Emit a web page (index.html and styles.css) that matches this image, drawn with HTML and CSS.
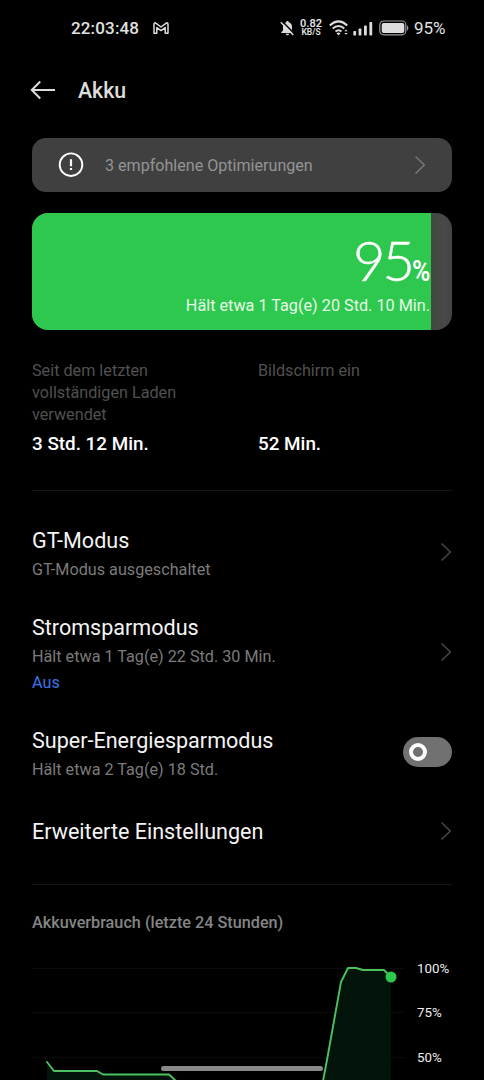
FILE: index.html
```html
<!DOCTYPE html>
<html lang="de">
<head>
<meta charset="utf-8">
<title>Akku</title>
<link rel="stylesheet" href="styles.css">
</head>
<body>
<div class="screen">
  <header class="status">
    <span class="clock">22:03:48</span>
    <svg class="mail" width="16" height="12" viewBox="0 0 16 12" fill="none" stroke="#ddd" stroke-width="1.5" stroke-linejoin="round"><path d="M1 11.2V2.2Q1 .8 2.4.8L8 5 13.6.8Q15 .8 15 2.2V11.2H12.2V5.6L8 8.6 3.8 5.6V11.2Z"/></svg>
    <svg class="bell" width="15" height="16" viewBox="0 0 15 16"><path d="M7.500 1C8.300 1 8.700 1.500 8.700 2.200 11 2.800 12 4.500 12 6.700V10.500L13.700 12.300V13H1.300V12.300L3 10.500V6.700C3 4.500 4 2.800 6.300 2.200 6.300 1.500 6.700 1 7.500 1ZM5.700 13.800H9.300Q9 15.300 7.500 15.300T5.700 13.800Z" fill="#ddd"/><path d="M2.200 1.200 14.600 14" stroke="#000" stroke-width="1.500"/><path d="M.8 2.200 13.300 15" stroke="#ddd" stroke-width="1.400"/></svg>
    <span class="speed"><b>0.82</b><b class="unit">KB/S</b></span>
    <svg class="wifi" width="20" height="16" viewBox="0 0 20 16" fill="none" stroke="#ddd" stroke-width="2"><path d="M.8 5.400Q9.500-2.600 18.200 5.400M3.700 8.600Q9.500 3.400 15.300 8.600M6.500 11.500Q9.500 9 12.500 11.500"/><path d="M7.500 13.200Q9.500 11.700 11.500 13.200L9.500 15.500Z" fill="#ddd" stroke="none"/><path d="M15.300 11.200 17 9.400 18.700 11.200ZM15.300 13 17 14.800 18.700 13Z" fill="#ddd" stroke="none"/></svg>
    <svg class="signal" width="20" height="15" viewBox="0 0 20 15" fill="#ddd"><rect x=".3" y="10" width="2.800" height="4.500" rx=".8"/><rect x="5.600" y="7.500" width="2.800" height="7" rx=".8"/><rect x="11" y="4.500" width="2.800" height="10" rx=".8"/><rect x="16.400" y="1" width="2.800" height="13.500" rx=".8"/></svg>
    <svg class="cell" width="30" height="16" viewBox="0 0 30 16"><rect x=".8" y="1" width="26" height="13.800" rx="3.800" fill="none" stroke="#999" stroke-width="1.200"/><rect x="2.700" y="2.900" width="22.600" height="10" rx="2" fill="#ddd"/><path d="M28 5.200Q29.300 6 29.300 8T28 10.800Z" fill="#999"/></svg>
    <span class="level">95%</span>
  </header>

  <div class="titlebar">
    <svg width="26" height="20" viewBox="0 0 26 20" fill="none" stroke="#ddd" stroke-width="2"><path d="M25 10H2M10.200 1.500 1.800 10 10.200 18.500"/></svg>
    <h1>Akku</h1>
  </div>

  <main>
    <div class="tips">
      <svg width="26" height="26" viewBox="0 0 26 26" fill="none" stroke="#fff"><circle cx="13" cy="12.700" r="11.300" stroke-width="1.900"/><path d="M13 7.200V14.300M13 15.900V18" stroke-width="2.200"/></svg>
      <span class="tips-text">3 empfohlene Optimierungen</span>
      <svg class="chevron light" width="12" height="20" viewBox="0 0 12 20"><path d="M1.500 1.500 10.300 10 1.500 18.500"/></svg>
    </div>

    <div class="battery">
      <div class="fill">
        <div class="percent"><span class="digits">95</span><span class="sign">%</span></div>
        <div class="remaining">Hält etwa 1 Tag(e) 20 Std. 10 Min.</div>
      </div>
    </div>

    <div class="stats">
      <div class="stat"><div class="label">Seit dem letzten<br>vollständigen Laden<br>verwendet</div><div class="value">3 Std. 12 Min.</div></div>
      <div class="stat"><div class="label">Bildschirm ein</div><div class="value">52 Min.</div></div>
    </div>

    <div class="row gt">
      <div><div class="name">GT-Modus</div><div class="sub">GT-Modus ausgeschaltet</div></div>
      <svg class="chevron" width="12" height="20" viewBox="0 0 12 20"><path d="M1.500 1.500 10.300 10 1.500 18.500"/></svg>
    </div>
    <div class="row saver">
      <div><div class="name">Stromsparmodus</div><div class="sub">Hält etwa 1 Tag(e) 22 Std. 30 Min.</div><div class="sub state">Aus</div></div>
      <svg class="chevron" width="12" height="20" viewBox="0 0 12 20"><path d="M1.500 1.500 10.300 10 1.500 18.500"/></svg>
    </div>
    <div class="row super">
      <div><div class="name">Super-Energiesparmodus</div><div class="sub">Hält etwa 2 Tag(e) 18 Std.</div></div>
      <div class="toggle"><div class="knob"></div></div>
    </div>
    <div class="row more">
      <div class="name">Erweiterte Einstellungen</div>
      <svg class="chevron" width="12" height="20" viewBox="0 0 12 20"><path d="M1.500 1.500 10.300 10 1.500 18.500"/></svg>
    </div>

    <section class="usage">
      <h2>Akkuverbrauch (letzte 24 Stunden)</h2>
      <div class="chart">
        <svg width="372" height="134" viewBox="32 946 372 134">
          <path d="M32 968.500H404M32 1012.500H404M32 1057.500H404" stroke="#0b0b0b"/>
          <path d="M47 1062 54 1071H97L103 1074.500H169L176 1081H322L341 982 348 968H356L363 970H384L391 977V1081H47Z" fill="#03140a"/>
          <path d="M47 1062 54 1071H97L103 1074.500H169L176 1081M323 1081 327 1060 341 982 348 968H356L363 970H384L391 977" fill="none" stroke="#4bc15f" stroke-width="1.900" stroke-linejoin="round" stroke-linecap="round"/>
          <circle cx="391" cy="977" r="5.500" fill="#2fc84f"/>
        </svg>
        <div class="scale"><span>100%</span><span>75%</span><span>50%</span></div>
      </div>
    </section>
  </main>
  <div class="home"></div>
</div>
</body>
</html>
```
FILE: styles.css
```css
* { box-sizing: border-box; }
body { margin: 0; background: #000; }
.screen {
  position: relative;
  width: 484px;
  height: 1080px;
  overflow: hidden;
  background: #000;
  color: #f2f2f2;
  font-family: Roboto, "Liberation Sans", sans-serif;
}
svg { display: block; flex: none; }

.status { display: flex; align-items: center; height: 56px; padding-left: 71px; color: #e2e2e2; white-space: nowrap; }
.clock { width: 82px; font-size: 17px; font-weight: 500; letter-spacing: .15px; }
.bell { margin-left: 111px; }
.speed { display: flex; flex-direction: column; align-items: center; width: 24px; margin: 0 0 0 4px; font-size: 11px; line-height: 9.500px; }
.speed b { font-weight: 600; }
.speed .unit { font-size: 8.500px; }
.wifi { margin-left: 6px; }
.signal { margin-left: 4px; }
.cell { margin-left: 6px; }
.level { margin-left: 5px; font-size: 17px; }

.titlebar { display: flex; align-items: center; gap: 22px; height: 68px; padding-left: 30px; }
h1 { margin: 0; font-size: 21.300px; font-weight: 500; color: #ddd; }

main { padding: 14px 32px 0; }
.tips { display: flex; align-items: center; height: 54px; padding: 0 26px; border-radius: 14px; background: #404040; }
.tips-text { flex: 1; margin-left: 21px; font-size: 16.100px; color: #949494; }
.chevron path { fill: none; stroke: #484848; stroke-width: 1.500; }
.chevron.light path { stroke: #777; }

.battery { height: 117px; margin-top: 21px; overflow: hidden; border-radius: 16px; background: linear-gradient(90deg, #404840 95%, #484848 98%, #444 100%); }
.fill { width: 399px; height: 117px; padding-top: 18px; background: #2fc84f; text-align: right; }
.percent { display: flex; align-items: baseline; justify-content: flex-end; height: 63px; line-height: 58px; color: #fff; }
.digits { font-family: Lato, sans-serif; font-weight: 300; font-size: 56px; letter-spacing: -3px; -webkit-text-stroke: .4px #fff; }
.sign { width: 19px; font-size: 30px; font-weight: 600; line-height: 30px; text-align: left; transform: scaleX(.83); transform-origin: left; }
.remaining { padding-right: 1px; font-size: 16.230px; line-height: 24px; color: #e4f9e8; white-space: nowrap; }

.stats { display: flex; height: 161px; padding-top: 30px; border-bottom: 1px solid #151515; }
.stat { width: 226px; flex: none; }
.label { height: 66px; font-size: 16.200px; line-height: 22px; color: #505050; }
.value { margin-top: 6px; font-size: 18.850px; line-height: 24px; font-weight: 500; color: #fff; }

.row { display: flex; justify-content: space-between; }
.name { font-size: 21.550px; line-height: 28px; color: #f4f4f4; white-space: nowrap; }
.sub { margin-top: 4px; font-size: 16.200px; line-height: 22px; color: #7b7b7b; white-space: nowrap; }
.state { color: #3d74e8; }
.gt { height: 109px; padding-top: 36px; }
.gt .chevron { margin-top: 15px; }
.saver { height: 107px; padding-top: 14px; }
.saver .chevron { margin-top: 28px; }
.super { height: 91px; padding-top: 20px; }
.toggle { display: flex; align-items: center; width: 49px; height: 30px; margin-top: 10px; padding-left: 6px; border-radius: 15px; background: #717171; }
.knob { width: 18px; height: 18px; border: 4px solid #fff; border-radius: 50%; }
.more { align-items: center; height: 67px; }
.more .chevron { margin-top: -2px; }

.usage { margin-top: 19px; padding-top: 27px; border-top: 1px solid #151515; }
h2 { margin: 0; font-size: 16.230px; line-height: 22px; font-weight: 500; color: #858585; }
.chart { display: flex; margin-top: 12px; }
.scale { display: flex; flex-direction: column; padding: 1px 0 0 13px; font-size: 13.300px; line-height: 44.300px; color: #eee; }
.home { position: absolute; left: 161px; top: 1066px; width: 162px; height: 5px; border-radius: 3px; background: #888; }
```
